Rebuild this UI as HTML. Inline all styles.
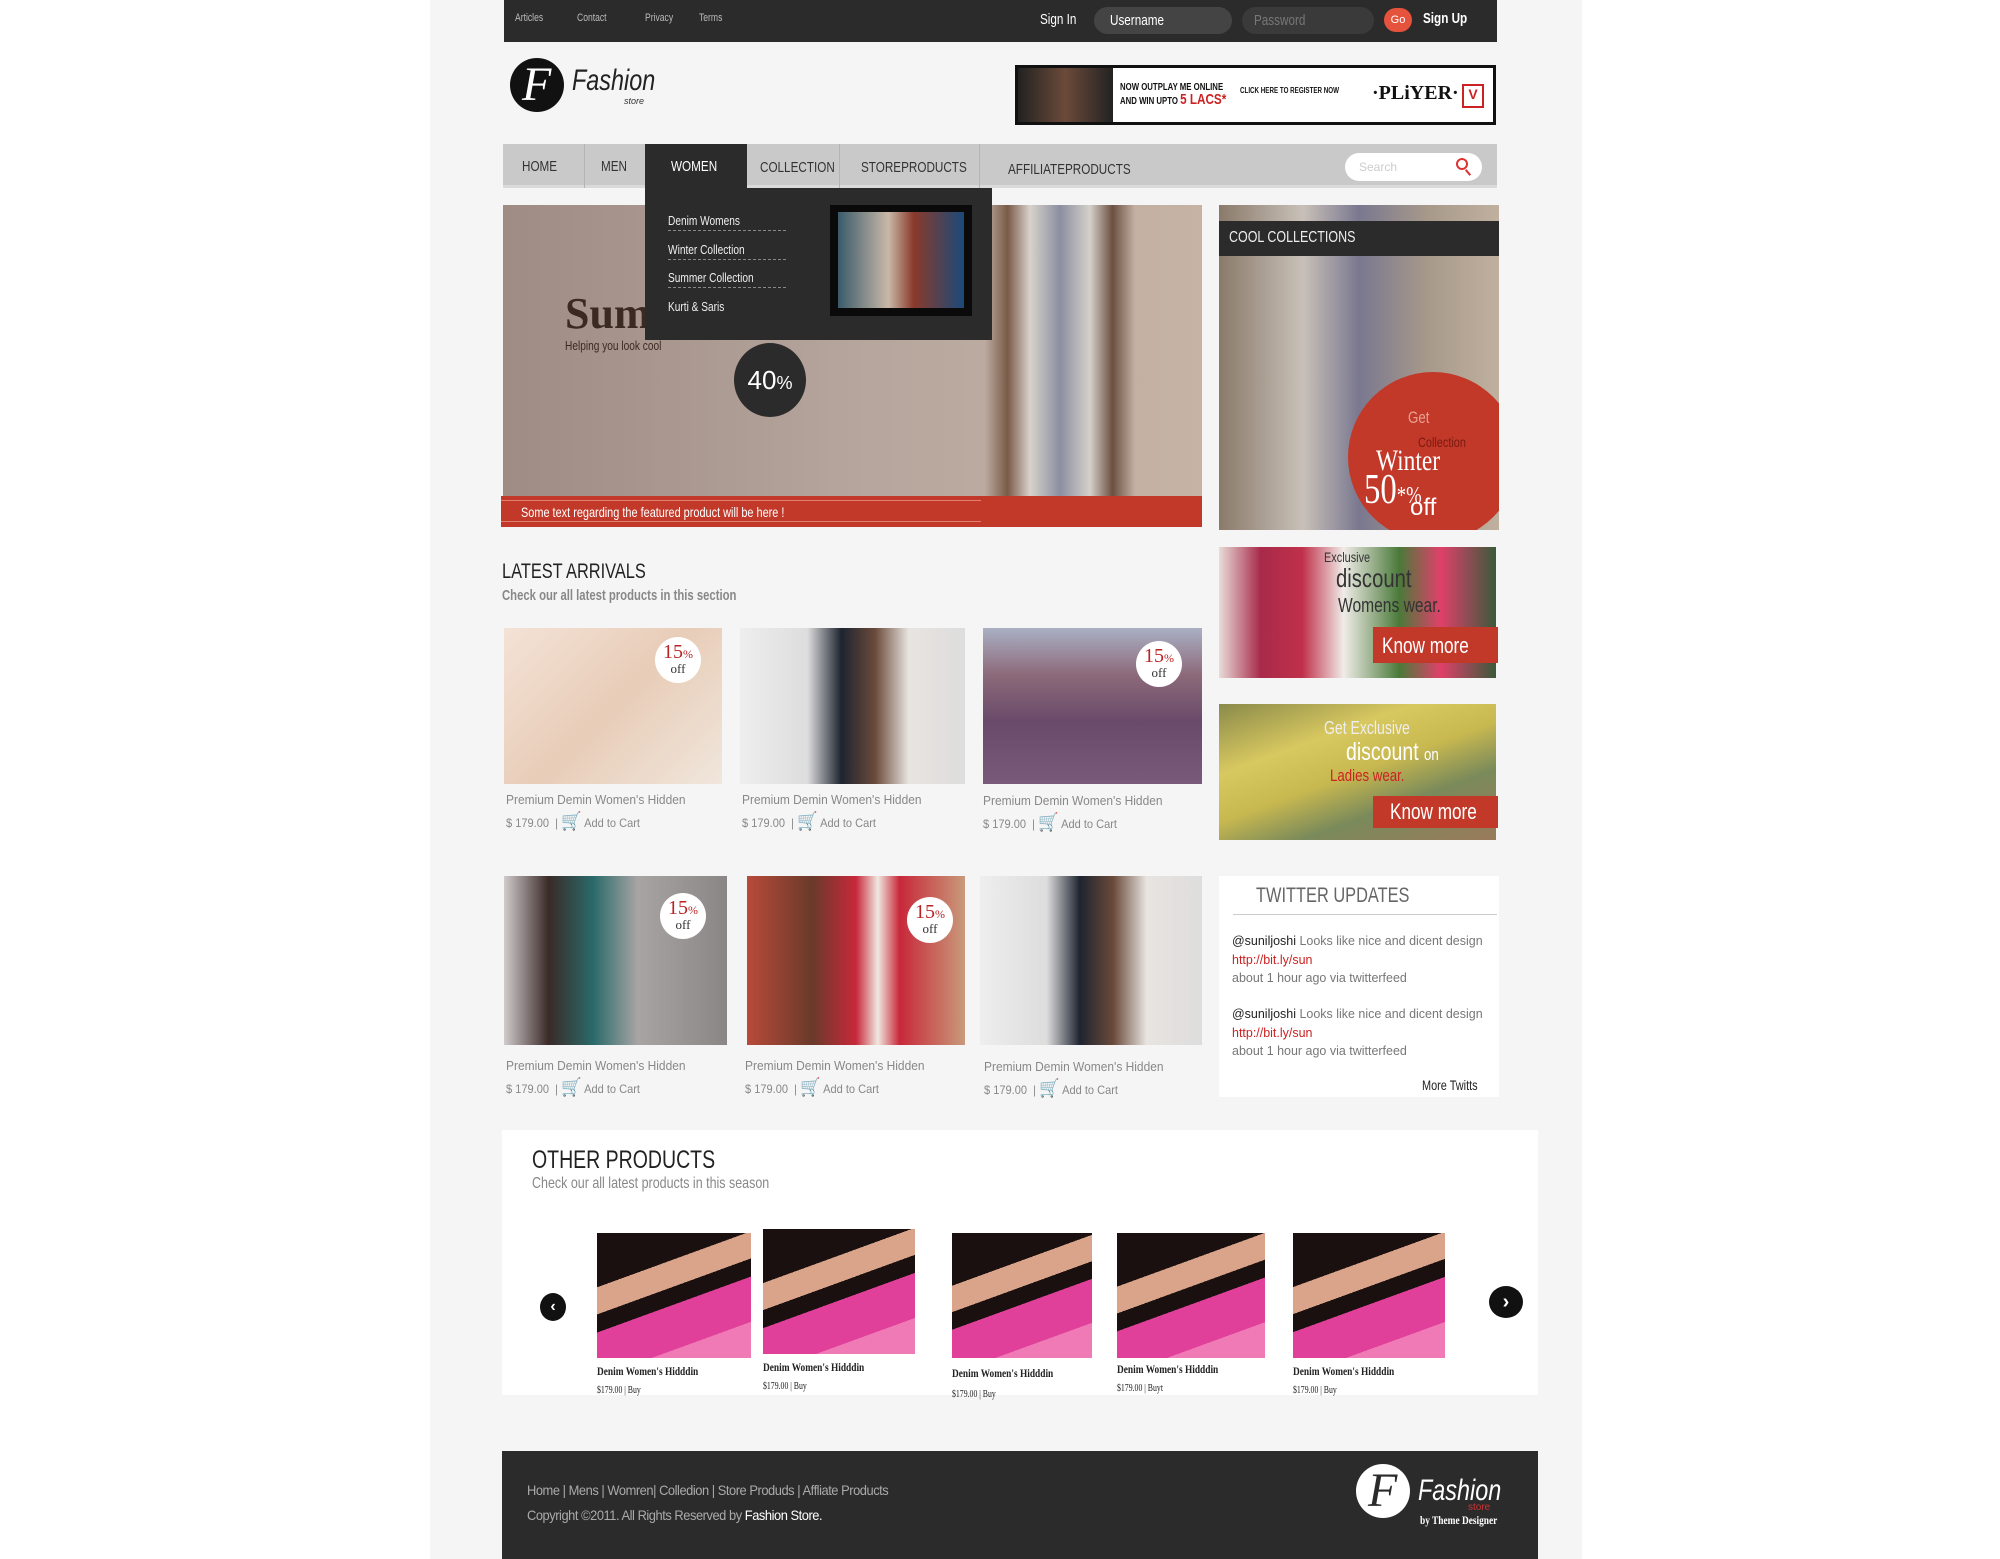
<!DOCTYPE html>
<html><head><meta charset="utf-8"><style>
*{margin:0;padding:0;box-sizing:border-box}
body{width:2000px;height:1559px;background:#fff;position:relative;overflow:hidden;font-family:"Liberation Sans",sans-serif}
.a{position:absolute;white-space:nowrap}
.n{transform:scaleX(.78);transform-origin:left top}
.m{transform:scaleX(.92);transform-origin:left top}
.img{position:absolute;overflow:hidden}
.badge{position:absolute;width:46px;height:46px;border-radius:50%;background:#fff;color:#b22;font-family:"Liberation Serif",serif;font-size:20px;text-align:center;line-height:18px;padding-top:6px}
.badge small{display:block;font-size:13px;color:#333;line-height:11px}
.pname{position:absolute;font-size:13px;color:#888;white-space:nowrap}
.price{position:absolute;font-size:12px;color:#888;white-space:nowrap}
.price b{color:#3aa0d0;font-weight:normal;font-size:18px}
.op{position:absolute;font-family:"Liberation Serif",serif;font-size:11px;color:#222;white-space:nowrap}
.op .i{height:125px;background:linear-gradient(160deg,#1a1010 0 30%,#d9a48a 30% 45%,#1a1010 45% 55%,#e0409a 55% 80%,#f07ab5 80%)}
</style></head><body>
<div class="a" style="left:430px;top:0;width:1152px;height:1559px;background:#f5f5f5"></div>
<!-- top bar -->
<div class="a" style="left:504px;top:0;width:993px;height:42px;background:#2b2b2b"></div>
<div class="a n" style="left:515px;top:12px;font-size:11px;color:#bbb">Articles</div>
<div class="a n" style="left:577px;top:12px;font-size:11px;color:#bbb">Contact</div>
<div class="a n" style="left:645px;top:12px;font-size:11px;color:#bbb">Privacy</div>
<div class="a n" style="left:699px;top:12px;font-size:11px;color:#bbb">Terms</div>
<div class="a n" style="left:1040px;top:11px;font-size:15px;color:#fff">Sign In</div>
<div class="a" style="left:1094px;top:7px;width:138px;height:27px;border-radius:14px;background:#444"></div>
<div class="a n" style="left:1110px;top:12px;color:#fff;font-size:15px">Username</div>
<div class="a" style="left:1242px;top:7px;width:132px;height:27px;border-radius:14px;background:#3a3a3a"></div>
<div class="a n" style="left:1254px;top:12px;color:#777;font-size:15px">Password</div>
<div class="a" style="left:1384px;top:8px;width:28px;height:24px;border-radius:12px;background:#e5533d;color:#fff;font-size:11px;text-align:center;line-height:24px">Go</div>
<div class="a n" style="left:1423px;top:10px;font-size:15px;color:#fff;font-weight:bold">Sign Up</div>
<!-- logo -->
<div class="a" style="left:510px;top:58px;width:54px;height:54px;border-radius:50%;background:#111"></div>
<div class="a" style="left:522px;top:58px;font-family:'Liberation Serif',serif;font-style:italic;font-size:48px;color:#fff;line-height:54px">F</div>
<div class="a n" style="left:572px;top:64px;font-style:italic;font-size:30px;color:#222">Fashion</div>
<div class="a" style="left:624px;top:96px;font-style:italic;font-size:9px;color:#333">store</div>
<!-- banner -->
<div class="a" style="left:1015px;top:65px;width:481px;height:60px;background:#fff;border:3px solid #111"></div>
<div class="a" style="left:1018px;top:68px;width:95px;height:54px;background:linear-gradient(90deg,#222,#6b4a3a,#222)"></div>
<div class="a n" style="left:1120px;top:82px;font-size:10px;color:#111;font-weight:bold;line-height:12px">NOW OUTPLAY ME ONLINE<br>AND WIN UPTO <span style="color:#c22;font-size:15px">5 LACS*</span></div>
<div class="a n" style="left:1240px;top:86px;font-size:8px;color:#111;font-weight:bold">CLICK HERE TO REGISTER NOW</div>
<div class="a" style="left:1372px;top:82px;font-family:'Liberation Serif',serif;font-size:20px;font-weight:bold;color:#111">·PLiYER·</div>
<div class="a" style="left:1462px;top:84px;width:22px;height:24px;border:2px solid #c22;color:#c22;font-weight:bold;text-align:center;font-size:14px">V</div>
<!-- nav -->
<div class="a" style="left:503px;top:144px;width:994px;height:44px;background:#c9c9c9;border-bottom:3px solid #dadada"></div>
<div class="a" style="left:584px;top:144px;width:1px;height:44px;background:#b5b5b5"></div>
<div class="a" style="left:839px;top:144px;width:1px;height:44px;background:#b5b5b5"></div>
<div class="a" style="left:979px;top:144px;width:1px;height:44px;background:#b5b5b5"></div>
<div class="a" style="left:645px;top:144px;width:102px;height:46px;background:#2b2b2b"></div>
<div class="a n" style="top:158px;left:522px;font-size:15px;color:#333">HOME</div>
<div class="a n" style="top:158px;left:601px;font-size:15px;color:#333">MEN</div>
<div class="a n" style="top:158px;left:671px;font-size:15px;color:#fff">WOMEN</div>
<div class="a n" style="top:159px;left:760px;font-size:15px;color:#333">COLLECTION</div>
<div class="a n" style="top:159px;left:861px;font-size:15px;color:#333">STOREPRODUCTS</div>
<div class="a n" style="top:161px;left:1008px;font-size:15px;color:#333">AFFILIATEPRODUCTS</div>
<div class="a" style="left:1345px;top:153px;width:137px;height:28px;border-radius:14px;background:#fff;color:#ccc;font-size:12px;padding:7px 14px">Search</div>
<div class="a" style="left:1456px;top:158px;width:12px;height:12px;border:2px solid #d33;border-radius:50%"></div>
<div class="a" style="left:1467px;top:169px;width:2px;height:7px;background:#d33;transform:rotate(-40deg)"></div>
<!-- hero -->
<div class="img" style="left:503px;top:205px;width:699px;height:322px;background:linear-gradient(90deg,#9f8c84 0%,#b5a59c 50%,#c6b3a5 100%)"></div>
<div class="img" style="left:985px;top:205px;width:150px;height:291px;background:linear-gradient(90deg,transparent,#7a5a48 15%,#d8d2cc 30%,#8b8fa0 50%,#d5d0ca 70%,#6c5040 85%,transparent)"></div>
<div class="a" style="left:565px;top:288px;font-family:'Liberation Serif',serif;font-size:44px;font-weight:bold;color:#3a2a22">Sum</div>
<div class="a n" style="left:565px;top:338px;font-size:13px;color:#3a2a22">Helping you look cool</div>
<div class="a" style="left:734px;top:343px;width:72px;height:74px;border-radius:50%;background:#2b2b2b;color:#fff;font-size:26px;text-align:center;line-height:74px">40<span style="font-size:18px">%</span></div>
<div class="a" style="left:501px;top:496px;width:701px;height:31px;background:#c2392a"></div>
<div class="a" style="left:501px;top:500px;width:480px;height:1px;background:#e08070"></div>
<div class="a" style="left:501px;top:521px;width:480px;height:1px;background:#e08070"></div>
<div class="a n" style="left:521px;top:504px;font-size:14px;color:#fff">Some text regarding the featured product will be here !</div>
<!-- dropdown -->
<div class="a" style="left:645px;top:188px;width:347px;height:152px;background:#2b2b2b"></div>
<div class="a n" style="left:668px;top:207px;font-size:13px;color:#eee;line-height:28.5px">Denim Womens<br>Winter Collection<br>Summer Collection<br>Kurti &amp; Saris</div>
<div class="a" style="left:668px;top:230px;width:118px;border-top:1px dashed #888"></div>
<div class="a" style="left:668px;top:259px;width:118px;border-top:1px dashed #888"></div>
<div class="a" style="left:668px;top:287px;width:118px;border-top:1px dashed #888"></div>
<div class="a" style="left:830px;top:205px;width:142px;height:111px;background:#0a0a0a"></div>
<div class="a" style="left:838px;top:212px;width:126px;height:96px;background:linear-gradient(90deg,#3a5a6a,#c9b8a8 40%,#8a3a2a 60%,#1a4a7a)"></div>
<!-- cool collections -->
<div class="img" style="left:1219px;top:205px;width:280px;height:325px;background:linear-gradient(90deg,#8a7a6a,#c8c0b8 30%,#7a7890 50%,#a89a8a 75%,#c0b0a0)"></div>
<div class="a" style="left:1219px;top:221px;width:280px;height:35px;background:#2b2b2b"></div>
<div class="a n" style="left:1229px;top:229px;font-size:16px;color:#eee">COOL COLLECTIONS</div>
<div class="img" style="left:1348px;top:372px;width:151px;height:158px"><div style="width:170px;height:170px;border-radius:50%;background:#c2392a"></div></div>
<div class="a n" style="left:1408px;top:408px;font-size:17px;color:#e8a090">Get</div>
<div class="a n" style="left:1418px;top:434px;font-size:14px;color:#7a1a10">Collection</div>
<div class="a n" style="left:1376px;top:444px;font-family:'Liberation Serif',serif;font-size:30px;color:#fff">Winter</div>
<div class="a n" style="left:1364px;top:466px;font-family:'Liberation Serif',serif;font-size:42px;color:#fff">50<span style="font-size:24px">*%</span></div>
<div class="a" style="left:1410px;top:494px;font-size:24px;color:#fff">off</div>
<!-- latest -->
<div class="a n" style="left:502px;top:560px;font-size:21px;color:#222">LATEST ARRIVALS</div>
<div class="a n" style="left:502px;top:588px;font-size:14.5px;color:#888;font-weight:bold">Check our all latest products in this section</div>
<div class="img" style="left:504px;top:628px;width:218px;height:156px;background:linear-gradient(135deg,#f4e2d6,#e8cdb8 50%,#f0e6dc)"></div>
<div class="img" style="left:740px;top:628px;width:225px;height:156px;background:linear-gradient(90deg,#eee,#ddd 30%,#1e2430 45%,#6a4a3a 60%,#e8e4e0 75%,#ddd)"></div>
<div class="img" style="left:983px;top:628px;width:219px;height:156px;background:linear-gradient(180deg,#aab0c4 0,#8c6a7a 30%,#6a4a6a 60%,#7a5a7a)"></div>
<div class="badge" style="left:655px;top:637px">15<span style="font-size:12px">%</span><small>off</small></div>
<div class="badge" style="left:1136px;top:641px">15<span style="font-size:12px">%</span><small>off</small></div>
<div class="pname m" style="left:506px;top:792px">Premium Demin Women's Hidden</div>
<div class="pname m" style="left:742px;top:792px">Premium Demin Women's Hidden</div>
<div class="pname m" style="left:983px;top:793px">Premium Demin Women's Hidden</div>
<div class="price m" style="left:506px;top:811px">$ 179.00 &nbsp;| <b>🛒</b> Add to Cart</div>
<div class="price m" style="left:742px;top:811px">$ 179.00 &nbsp;| <b>🛒</b> Add to Cart</div>
<div class="price m" style="left:983px;top:812px">$ 179.00 &nbsp;| <b>🛒</b> Add to Cart</div>
<div class="img" style="left:504px;top:876px;width:223px;height:169px;background:linear-gradient(90deg,#d0cccc,#3a2a28 20%,#2a6a6a 40%,#a8a4a4 60%,#8a8686)"></div>
<div class="img" style="left:747px;top:876px;width:218px;height:169px;background:linear-gradient(90deg,#b84a3a,#6a3a2a 30%,#c8283a 50%,#f0e8e0 60%,#c8283a 70%,#c89a7a)"></div>
<div class="img" style="left:980px;top:876px;width:222px;height:169px;background:linear-gradient(90deg,#eee,#ddd 30%,#1e2430 45%,#6a4a3a 60%,#e8e4e0 75%,#ddd)"></div>
<div class="badge" style="left:660px;top:893px">15<span style="font-size:12px">%</span><small>off</small></div>
<div class="badge" style="left:907px;top:897px">15<span style="font-size:12px">%</span><small>off</small></div>
<div class="pname m" style="left:506px;top:1058px">Premium Demin Women's Hidden</div>
<div class="pname m" style="left:745px;top:1058px">Premium Demin Women's Hidden</div>
<div class="pname m" style="left:984px;top:1059px">Premium Demin Women's Hidden</div>
<div class="price m" style="left:506px;top:1077px">$ 179.00 &nbsp;| <b>🛒</b> Add to Cart</div>
<div class="price m" style="left:745px;top:1077px">$ 179.00 &nbsp;| <b>🛒</b> Add to Cart</div>
<div class="price m" style="left:984px;top:1078px">$ 179.00 &nbsp;| <b>🛒</b> Add to Cart</div>
<!-- promos -->
<div class="img" style="left:1219px;top:547px;width:277px;height:131px;background:linear-gradient(90deg,#e8dcd8,#a82a4a 15%,#c0304a 30%,#f0ece8 45%,#4a7a3a 65%,#e0406a 80%,#3a5a3a)"></div>
<div class="a n" style="left:1324px;top:549px;font-size:14px;color:#333">Exclusive</div>
<div class="a n" style="left:1336px;top:563px;font-size:26px;color:#333">discount</div>
<div class="a n" style="left:1338px;top:595px;font-size:20px;color:#333">Womens wear.</div>
<div class="a" style="left:1373px;top:627px;width:125px;height:36px;background:#c2392a"></div>
<div class="a n" style="left:1382px;top:633px;color:#fff;font-size:22px">Know more</div>
<div class="img" style="left:1219px;top:704px;width:277px;height:136px;background:linear-gradient(160deg,#8a8a4a,#d8c860 30%,#c8b850 50%,#7a8a5a 70%,#9a7a5a)"></div>
<div class="a n" style="left:1324px;top:718px;font-size:18px;color:#eee">Get Exclusive</div>
<div class="a n" style="left:1346px;top:738px;font-size:25px;color:#fff">discount <span style="font-size:17px">on</span></div>
<div class="a n" style="left:1330px;top:766px;font-size:17px;color:#c22">Ladies wear.</div>
<div class="a" style="left:1373px;top:796px;width:125px;height:32px;background:#c2392a"></div>
<div class="a n" style="left:1390px;top:799px;color:#fff;font-size:22px">Know more</div>
<!-- twitter -->
<div class="a" style="left:1219px;top:876px;width:280px;height:221px;background:#fff"></div>
<div class="a n" style="left:1256px;top:884px;font-size:21px;color:#666">TWITTER UPDATES</div>
<div class="a" style="left:1233px;top:914px;width:264px;height:1px;background:#ccc"></div>
<div class="a" style="left:1232px;top:932px;font-size:13px;color:#777;line-height:18.5px;transform:scaleX(.96);transform-origin:left"><span style="color:#222">@suniljoshi</span> Looks like nice and dicent design<br><span style="color:#c22">http://bit.ly/sun</span><br>about 1 hour ago via twitterfeed</div>
<div class="a" style="left:1232px;top:1005px;font-size:13px;color:#777;line-height:18.5px;transform:scaleX(.96);transform-origin:left"><span style="color:#222">@suniljoshi</span> Looks like nice and dicent design<br><span style="color:#c22">http://bit.ly/sun</span><br>about 1 hour ago via twitterfeed</div>
<div class="a n" style="left:1422px;top:1077px;font-size:14px;color:#222">More Twitts</div>
<!-- other products -->
<div class="a" style="left:502px;top:1130px;width:1036px;height:265px;background:#fff"></div>
<div class="a n" style="left:532px;top:1146px;font-size:25px;color:#222">OTHER PRODUCTS</div>
<div class="a n" style="left:532px;top:1175px;font-size:16px;color:#888">Check our all latest products in this season</div>
<div class="a" style="left:540px;top:1293px;width:26px;height:28px;border-radius:50%;background:#111;color:#fff;text-align:center;line-height:28px;font-weight:bold">‹</div>
<div class="a" style="left:1489px;top:1286px;width:34px;height:32px;border-radius:50%;background:#111;color:#fff;text-align:center;line-height:32px;font-weight:bold;font-size:20px">›</div>
<div class="op" style="left:597px;top:1233px;width:154px"><div class="i"></div><div class="n" style="margin-top:6px;font-weight:bold;font-size:12px">Denim Women's Hidddin</div><div class="n" style="margin-top:6px;font-size:10px">$179.00 | Buy</div></div>
<div class="op" style="left:763px;top:1229px;width:152px"><div class="i"></div><div class="n" style="margin-top:6px;font-weight:bold;font-size:12px">Denim Women's Hidddin</div><div class="n" style="margin-top:6px;font-size:10px">$179.00 | Buy</div></div>
<div class="op" style="left:952px;top:1233px;width:140px"><div class="i"></div><div class="n" style="margin-top:8px;font-weight:bold;font-size:12px">Denim Women's Hidddin</div><div class="n" style="margin-top:8px;font-size:10px">$179.00 | Buy</div></div>
<div class="op" style="left:1117px;top:1233px;width:148px"><div class="i"></div><div class="n" style="margin-top:4px;font-weight:bold;font-size:12px">Denim Women's Hidddin</div><div class="n" style="margin-top:6px;font-size:10px">$179.00 | Buyt</div></div>
<div class="op" style="left:1293px;top:1233px;width:152px"><div class="i"></div><div class="n" style="margin-top:6px;font-weight:bold;font-size:12px">Denim Women's Hidddin</div><div class="n" style="margin-top:6px;font-size:10px">$179.00 | Buy</div></div>
<!-- footer -->
<div class="a" style="left:502px;top:1451px;width:1036px;height:108px;background:#2b2b2b"></div>
<div class="a m" style="left:527px;top:1482px;font-size:14px;color:#aaa;letter-spacing:-0.5px">Home | Mens | Womren| Colledion | Store Produds | Affliate Products</div>
<div class="a m" style="left:527px;top:1507px;font-size:14px;color:#aaa;letter-spacing:-0.5px">Copyright ©2011. All Rights Reserved by <span style="color:#fff">Fashion Store.</span></div>
<div class="a" style="left:1356px;top:1464px;width:54px;height:54px;border-radius:50%;background:#fff"></div>
<div class="a" style="left:1368px;top:1464px;font-family:'Liberation Serif',serif;font-style:italic;font-size:48px;color:#2b2b2b;line-height:54px">F</div>
<div class="a n" style="left:1418px;top:1474px;font-style:italic;font-size:30px;color:#fff">Fashion</div>
<div class="a" style="left:1468px;top:1502px;font-size:10px;color:#c33">store</div>
<div class="a n" style="left:1420px;top:1513px;font-family:'Liberation Serif',serif;font-size:12px;font-weight:bold;color:#fff">by Theme Designer</div>
</body></html>
